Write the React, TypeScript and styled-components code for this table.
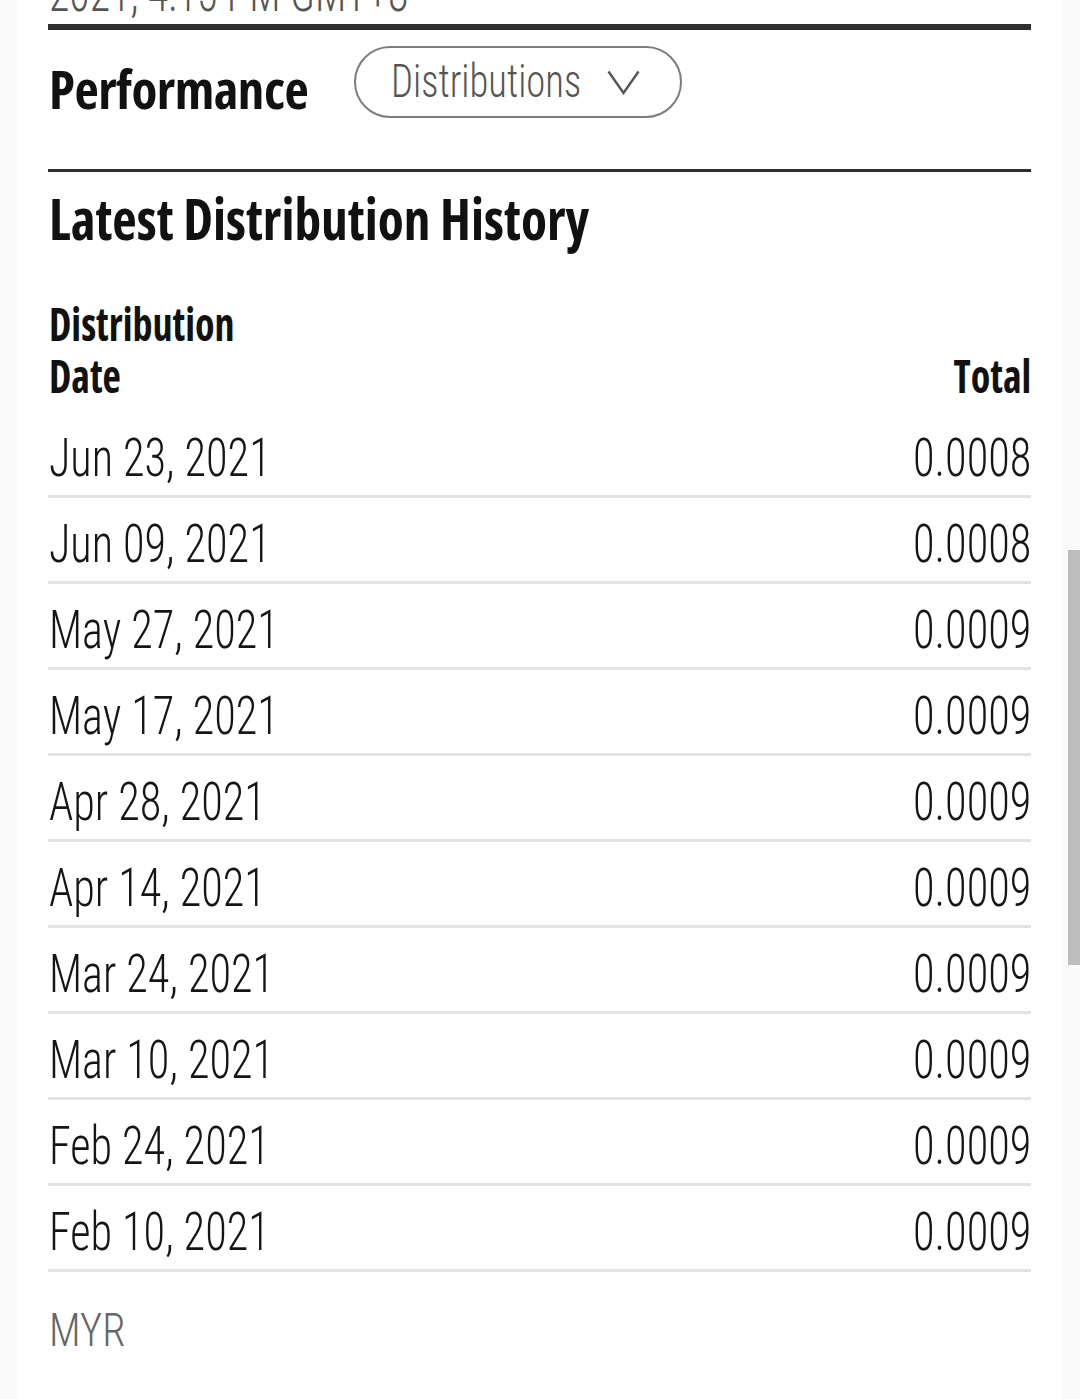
import React from "react";
import styled, { createGlobalStyle, css } from "styled-components";

const GlobalStyle = createGlobalStyle`
  html, body {
    margin: 0;
    padding: 0;
    background: #fafafa;
  }
  body {
    font-family: "Roboto Condensed", "DejaVu Sans Condensed", sans-serif;
    color: #111;
    overflow: hidden;
  }
`;

/* narrows a text to the width of the reference's condensed face */
const squeeze = (scale: number, origin: "left" | "right" = "left") => css`
  transform: scaleX(${scale});
  transform-origin: ${origin} center;
`;

const Page = styled.div`
  position: relative;
  background: #fafafa;
  padding: 0 18px 0 17px;
  height: 1399px;
  overflow: hidden;
`;

const Column = styled.main`
  background: #fff;
  height: 100%;
  padding: 0 31px 0 31px;
  display: flex;
  flex-direction: column;
`;

const Timestamp = styled.div`
  margin: -34px 0 0 1px;
  font-size: 54px;
  line-height: 54px;
  font-weight: 300;
  color: #555;
  white-space: nowrap;
  ${squeeze(0.775)}
`;

const HeavyRule = styled.hr<{ $thick: number; $gap: number }>`
  border: 0;
  margin: ${(p) => p.$gap}px 0 0 0;
  height: ${(p) => p.$thick}px;
  background: #2f2f2f;
`;

const PerfRow = styled.div`
  display: flex;
  align-items: flex-start;
  gap: 46px;
  padding: 16px 0 0 1px;
  height: 139px;
  box-sizing: border-box;
`;

const PerfTitle = styled.h2`
  margin: 16px 0 0 0;
  font-family: "Open Sans", sans-serif;
  font-stretch: 75%;
  font-size: 53px;
  line-height: 54px;
  font-weight: 700;
  letter-spacing: -0.5px;
  white-space: nowrap;
`;

const Pill = styled.button`
  box-sizing: border-box;
  width: 328px;
  height: 72px;
  flex: none;
  border: 2.5px solid #7d7d7d;
  border-radius: 36px;
  background: #fff;
  display: flex;
  align-items: center;
  justify-content: space-between;
  padding: 0 40px 0 35px;
  font-family: inherit;
  font-weight: 300;
  font-size: 46px;
  color: #555;
  cursor: pointer;
`;

const PillLabel = styled.span`
  min-width: 0;
  flex: 1 1 auto;
  text-align: left;
  white-space: nowrap;
  line-height: 1;
  margin-top: -2px;
  ${squeeze(0.84)}
`;

const Chevron = styled.svg`
  width: 33px;
  height: 25px;
  flex: none;
`;

const HistoryTitle = styled.h1`
  margin: 17px 0 0 1px;
  font-family: "Open Sans", sans-serif;
  font-stretch: 75%;
  font-size: 58px;
  line-height: 58px;
  font-weight: 700;
  white-space: nowrap;
  ${squeeze(0.92)}
`;

const Table = styled.div`
  margin-top: 50px;
  display: flex;
  flex-direction: column;
`;

const HeadRow = styled.div`
  display: flex;
  justify-content: space-between;
  align-items: flex-end;
  padding-left: 1px;
  font-family: "Open Sans", sans-serif;
  font-stretch: 75%;
  font-size: 46px;
  line-height: 52px;
  font-weight: 700;
  margin-bottom: 11px;
`;

const HeadCell = styled.div<{ $end?: boolean }>`
  white-space: nowrap;
  ${(p) => squeeze(0.87, p.$end ? "right" : "left")}
`;

const Row = styled.div`
  box-sizing: content-box;
  height: 73px;
  padding: 0 0 10px 1px;
  border-bottom: 3px solid #e3e3e3;
  display: flex;
  justify-content: space-between;
  align-items: flex-end;
  font-size: 54px;
  line-height: 54px;
  font-weight: 300;
  color: #151515;
`;

const Cell = styled.span<{ $end?: boolean }>`
  white-space: nowrap;
  ${(p) => squeeze(0.82, p.$end ? "right" : "left")}
`;

const Currency = styled.div`
  margin: 35px 0 0 1px;
  font-size: 46px;
  line-height: 46px;
  font-weight: 300;
  color: #666;
  ${squeeze(0.92)}
`;

const ScrollThumb = styled.div`
  position: absolute;
  right: 0;
  top: 550px;
  width: 12px;
  height: 415px;
  background: #bdbdbd;
`;

const rows: [string, string][] = [
  ["Jun 23, 2021", "0.0008"],
  ["Jun 09, 2021", "0.0008"],
  ["May 27, 2021", "0.0009"],
  ["May 17, 2021", "0.0009"],
  ["Apr 28, 2021", "0.0009"],
  ["Apr 14, 2021", "0.0009"],
  ["Mar 24, 2021", "0.0009"],
  ["Mar 10, 2021", "0.0009"],
  ["Feb 24, 2021", "0.0009"],
  ["Feb 10, 2021", "0.0009"],
];

export default function App() {
  return (
    <>
      <GlobalStyle />
      <Page>
        <Column>
          <Timestamp>2021, 4:15 PM GMT+8</Timestamp>
          <HeavyRule $thick={6} $gap={4} />
          <PerfRow>
            <PerfTitle>Performance</PerfTitle>
            <Pill type="button">
              <PillLabel>Distributions</PillLabel>
              <Chevron viewBox="0 0 33 25" aria-hidden="true">
                <polyline
                  points="1.5,1.5 16.5,23 31.5,1.5"
                  fill="none"
                  stroke="#555"
                  strokeWidth="2.4"
                />
              </Chevron>
            </Pill>
          </PerfRow>
          <HeavyRule $thick={3} $gap={0} />
          <HistoryTitle>Latest Distribution History</HistoryTitle>
          <Table>
            <HeadRow>
              <HeadCell>
                Distribution
                <br />
                Date
              </HeadCell>
              <HeadCell $end>Total</HeadCell>
            </HeadRow>
            {rows.map(([d, v]) => (
              <Row key={d}>
                <Cell>{d}</Cell>
                <Cell $end>{v}</Cell>
              </Row>
            ))}
          </Table>
          <Currency>MYR</Currency>
        </Column>
        <ScrollThumb />
      </Page>
    </>
  );
}
